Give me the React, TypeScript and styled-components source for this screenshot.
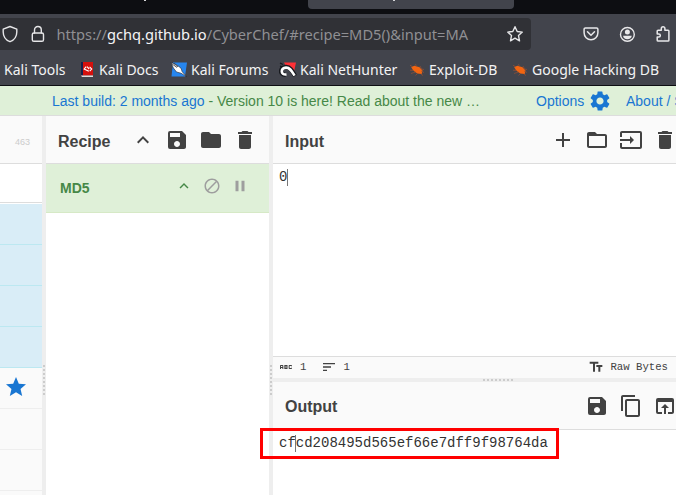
import React from "react";
import styled, { createGlobalStyle } from "styled-components";
import {
  MdAbc,
  MdAdd,
  MdBlock,
  MdContentCopy,
  MdDelete,
  MdFolder,
  MdFolderOpen,
  MdInput,
  MdKeyboardArrowUp,
  MdOpenInBrowser,
  MdPause,
  MdSave,
  MdSettings,
  MdSort,
  MdStar,
  MdTextFields,
} from "react-icons/md";

const GlobalStyle = createGlobalStyle`
  * { box-sizing: border-box; }
  html, body { margin: 0; height: 100%; overflow: hidden; }
  body { background: #fff; font-family: "Liberation Sans", Arial, sans-serif; }
  svg { display: block; flex: none; }
`;

const Window = styled.div`
  position: relative;
  width: 676px;
  height: 495px;
  display: flex;
  flex-direction: column;
  overflow: hidden;
  white-space: nowrap;
`;

/* Browser chrome */
const TabStrip = styled.div`
  height: 14px;
  flex: none;
  padding-left: 144px;
  display: flex;
  align-items: flex-start;
  background: #0d0e12;
`;
const Descender = styled.i`
  width: 2px;
  height: 1px;
  background: #d5d5d8;
`;
const ActiveTab = styled.div`
  width: 206px;
  height: 9px;
  margin-left: 162px;
  padding-left: 85px;
  display: flex;
  background: #42444c;
  border-radius: 0 0 4px 4px;
`;
const NavBar = styled.div`
  height: 36px;
  flex: none;
  padding-top: 4px;
  display: flex;
  background: #42444c;
`;
const AddressBar = styled.div`
  width: 531px;
  height: 32px;
  padding: 0 7px 0 1px;
  display: flex;
  align-items: center;
  background: #303136;
  border-radius: 0 4px 4px 0;
  color: #e6e6e8;
`;
const LockSlot = styled.span`
  margin-left: 10px;
`;
const Url = styled.span`
  width: 440px;
  margin: 0 auto 0 9.5px;
  font: 14.65px/32px "Noto Sans", sans-serif;
  color: #8f8f93;
  b { font-weight: 400; color: #f5f5f6; }
`;
const NavActions = styled.div`
  height: 32px;
  margin-left: 51px;
  display: flex;
  align-items: center;
  gap: 18px;
  color: #e8e8ea;
`;
const Bookmarks = styled.div`
  height: 36px;
  flex: none;
  padding: 4px 0 0 4px;
  display: flex;
  background: #42444c;
  border-bottom: 1px solid #0d0e12;
`;
const Bookmark = styled.span<{ $width: number; $gap?: number }>`
  width: ${(p) => p.$width}px;
  height: 32px;
  flex: none;
  display: flex;
  align-items: center;
  gap: ${(p) => p.$gap ?? 3}px;
  font: 14px/32px "Noto Sans", sans-serif;
  color: #f3f3f4;
`;

/* Application */
const Banner = styled.div`
  height: 30px;
  flex: none;
  padding-left: 52px;
  display: flex;
  align-items: center;
  background: #dff0d8;
  border-bottom: 1px solid #ddd;
  font-size: 14px;
  color: #468847;
`;
const Notice = styled.span`
  width: 484px;
  flex: none;
`;
const Link = styled.span`
  color: #1976d2;
`;
const OptionsLink = styled(Link)`
  width: 90px;
  flex: none;
  display: flex;
  align-items: center;
  gap: 4px;
`;
const Workspace = styled.div`
  flex: 1;
  min-height: 0;
  display: flex;
`;
const Operations = styled.div`
  width: 42px;
  overflow: hidden;
`;
const OpCount = styled.div`
  height: 48px;
  padding-left: 15px;
  background: #fafafa;
  border-bottom: 1px solid #ddd;
  font-size: 9px;
  line-height: 52px;
  color: #ccc;
`;
const SearchBox = styled.div`
  height: 39px;
  margin-bottom: 1px;
  border-bottom: 1px solid #ddd;
`;
const Operation = styled.div`
  height: 41px;
  background: #d9edf7;
  border-bottom: 1px solid #bce8f1;
`;
const Category = styled.div`
  height: 41px;
  padding: 7px 0 0 4px;
  background: #fafafa;
  border-bottom: 1px solid #eee;
  color: #1976d2;
`;
const Divider = styled.div<{ $top: number }>`
  width: 4px;
  flex: none;
  padding: ${(p) => p.$top}px 1px 0;
  background: #eee;
`;
const VerticalGrip = styled.div`
  width: 2px;
  height: 30px;
  background: repeating-linear-gradient(#ccc 0 2px, transparent 2px 4px);
`;
const Splitter = styled.div`
  height: 4px;
  flex: none;
  padding: 1px 0 0 210px;
  background: #eee;
`;
const HorizontalGrip = styled.div`
  width: 30px;
  height: 2px;
  background: repeating-linear-gradient(90deg, #ccc 0 2px, transparent 2px 4px);
`;
const RecipePane = styled.section`
  width: 223px;
`;
const IoPane = styled.section`
  flex: 1;
  min-width: 0;
  display: flex;
  flex-direction: column;
`;
const PaneHeader = styled.header`
  height: 48px;
  flex: none;
  padding-left: 12px;
  display: flex;
  align-items: center;
  justify-content: space-between;
  background: #fafafa;
  border-bottom: 1px solid #ddd;
  color: #424242;
`;
const Title = styled.h2<{ $drop: number }>`
  margin: 0;
  padding-top: ${(p) => p.$drop}px;
  font-size: 16px;
  line-height: 20px;
`;
const Controls = styled.div<{ $end: number }>`
  display: flex;
  gap: 10px;
  padding-top: 1px;
  margin-right: ${(p) => p.$end}px;
`;
const RecipeStep = styled.div`
  height: 49px;
  padding: 0 20px 3px 14px;
  display: flex;
  align-items: center;
  background: #dff0d8;
  border-bottom: 1px solid #d6e9c6;
  color: #468847;
`;
const StepName = styled.span`
  flex: 1;
  padding-top: 2px;
  font-size: 14px;
  font-weight: 700;
`;
const StepControls = styled.div`
  display: flex;
  gap: 10px;
  padding-bottom: 2px;
  color: #9e9e9e;
  svg:first-child { color: #468847; }
`;
const Editor = styled.div`
  height: 192px;
  flex: none;
  padding: 4px 0 0 6px;
  display: flex;
  font: 14px/18px "Liberation Mono", monospace;
  color: #333;
`;
const Caret = styled.i<{ $shift?: number }>`
  width: 1px;
  height: 17px;
  margin: 1px ${(p) => -1 + (p.$shift ?? 0)}px 0 ${(p) => -(p.$shift ?? 0)}px;
  background: #777;
`;
const StatusBar = styled.div`
  height: 22px;
  flex: none;
  padding: 0 8px 1px 5px;
  display: flex;
  align-items: center;
  background: #fafafa;
  border-top: 1px solid #ddd;
  font: 10.67px/20px "Liberation Mono", monospace;
  color: #424242;
`;
const Stat = styled.span<{ $push?: boolean }>`
  display: flex;
  align-items: center;
  gap: 6px;
  margin: ${(p) => (p.$push ? "0 0 0 auto" : "0 15px 0 0")};
`;
const Highlight = styled.div`
  position: absolute;
  left: 260px;
  top: 428px;
  width: 299px;
  height: 31px;
  border: 3px solid #f00;
`;

const line = { fill: "none", stroke: "currentColor", strokeWidth: 1.4, strokeLinejoin: "round", strokeLinecap: "round" } as const;

const Shield = () => (
  <svg width="18" height="18" viewBox="0 0 18 18" {...line}>
    <path d="M9 1.5 15.8 4.1V7c0 4.3-2.4 8-6.8 9.7C4.6 15 2.2 11.3 2.2 7V4.1Z" />
  </svg>
);
const Lock = () => (
  <svg width="18" height="18" viewBox="0 0 18 18" {...line}>
    <rect x="3.3" y="8" width="11.2" height="8.3" rx="1.6" />
    <path d="M5.5 8V4.9a3.4 3.4 0 0 1 6.8 0V8" />
  </svg>
);
const StarOutline = () => (
  <svg width="18" height="18" viewBox="0 0 18 18" {...line}>
    <path d="m9 1.7 2.2 4.8 5.1.6-3.8 3.5 1 5.2L9 13.2l-4.5 2.6 1-5.2L1.7 7.1l5.1-.6Z" />
  </svg>
);
const Pocket = () => (
  <svg width="18" height="18" viewBox="0 0 18 18" {...line} strokeWidth={1.5}>
    <path d="M3.4 3h11.2c.8 0 1.3.5 1.3 1.3v3.5a6.9 6.9 0 0 1-13.8 0V4.3C2.1 3.5 2.6 3 3.4 3Z" />
    <path d="m5.5 6.8 3.5 3.4 3.5-3.4" />
  </svg>
);
const Account = () => (
  <svg width="18" height="18" viewBox="0 0 18 18" {...line}>
    <circle cx="9.4" cy="9.4" r="6.9" />
    <circle cx="9.4" cy="7.1" r="2.5" fill="currentColor" stroke="none" />
    <path d="M5.1 10.7h8.6c0 2.1-1.9 3.5-4.3 3.5s-4.3-1.4-4.3-3.5Z" fill="currentColor" stroke="none" />
  </svg>
);
const Puzzle = () => (
  <svg width="18" height="18" viewBox="0 0 18 18" {...line} strokeWidth={1.5}>
    <path d="M3.2 6.1c0-.6.3-.9.9-.9h3.2V3.6a1.8 1.8 0 0 1 3.6 0v1.6h3.2c.5 0 .8.3.8.9v9.1c0 .6-.3.9-.9.9H4.1c-.6 0-.9-.3-.9-.9v-3.1h1.6a1.5 1.5 0 0 0 0-3.1H3.2Z" />
  </svg>
);
const DocsIcon = () => (
  <svg width="14" height="18" viewBox="0 0 14 18">
    <path d="M1 1h12v13.5H1Z" fill="#d5100d" />
    <path d="M1 1h2v13.5H1Z" fill="#16204c" />
    <path d="M1 14.5h12v1.6H2Z" fill="#dedede" />
    <path d="M6.2 5.7 4.2 8l4.6 2.2M9.6 5.8l2.100 2.200-2 2.200M9.200 8 7 5.700" fill="none" stroke="#fff" strokeWidth="1.1" />
  </svg>
);
const ForumsIcon = () => (
  <svg width="18" height="18" viewBox="0 0 18 18">
    <path d="M3 1.500h14L15 15.500H1.500Z" fill="#2786ee" />
    <path d="m1 1.500 5.500 2.200 4.500 3.500 1.200 3.500 4.500 5-5.700-3.500-4.500-1.200L3.400 7Z" fill="#fff" stroke="#1c222d" strokeWidth=".6" />
    <path d="m1.500 2.500 5.500 4M4 2.500l4 3.500" stroke="#303238" strokeWidth=".8" />
  </svg>
);
const NetHunterIcon = () => (
  <svg width="18" height="18" viewBox="0 0 18 18">
    <path d="M5 1.500h12L14.700 12 8 7Z" fill="#ff3036" />
    <path d="M6.500 13.700C.5 14 .5 6.500 7 6c4.500-.2 6.500 4.500 9 9" fill="none" stroke="#17191e" strokeWidth="4.400" />
    <path d="M7.500 13.500C.9 14 1.700 7 7 6.600c4-.2 6 4 8.500 8" fill="none" stroke="#fff" strokeWidth="2.600" />
    <path d="m1 2 3 1.500M1 5l2 .8" stroke="#17191e" strokeWidth="1.300" />
  </svg>
);
const BugIcon = () => (
  <svg width="16" height="16" viewBox="0 0 16 16">
    <path d="m2.2 5 3.300-1.200 5 1.500 3 3.200-.8 3.500-4.500-.5-4-3Z" fill="#f26511" />
    <path d="M1 3.200 4 5M6.500 2.200l1 2.500M11 4l1.500 3 2.500.5M1 8.200l4 .3M2 11.500l4.500-1.500M6.500 13.500l2-2M12 12l2 1.500M12 9l3 1.500" stroke="#9b5030" strokeWidth=".7" fill="none" />
  </svg>
);

export default function App() {
  return (
    <>
      <GlobalStyle />
      <Window>
        <TabStrip>
          <Descender />
          <ActiveTab><Descender /></ActiveTab>
        </TabStrip>
        <NavBar>
          <AddressBar>
            <Shield />
            <LockSlot><Lock /></LockSlot>
            <Url>https://<b>gchq.github.io</b>/CyberChef/#recipe=MD5()&amp;input=MA</Url>
            <StarOutline />
          </AddressBar>
          <NavActions><Pocket /><Account /><Puzzle /></NavActions>
        </NavBar>
        <Bookmarks>
          <Bookmark $width={76}>Kali Tools</Bookmark>
          <Bookmark $width={90} $gap={5}><DocsIcon />Kali Docs</Bookmark>
          <Bookmark $width={109}><ForumsIcon />Kali Forums</Bookmark>
          <Bookmark $width={130}><NetHunterIcon />Kali NetHunter</Bookmark>
          <Bookmark $width={103} $gap={4}><BugIcon />Exploit-DB</Bookmark>
          <Bookmark $width={160} $gap={4}><BugIcon />Google Hacking DB</Bookmark>
        </Bookmarks>
        <Banner>
          <Notice><Link>Last build: 2 months ago</Link> - Version 10 is here! Read about the new …</Notice>
          <OptionsLink>Options <MdSettings size={24} /></OptionsLink>
          <Link>About / S</Link>
        </Banner>
        <Workspace>
          <Operations>
            <OpCount>463</OpCount>
            <SearchBox />
            <Operation /><Operation /><Operation /><Operation />
            <Category><MdStar size={24} /></Category>
            <Category /><Category /><Category />
          </Operations>
          <Divider $top={249}><VerticalGrip /></Divider>
          <RecipePane>
            <PaneHeader>
              <Title $drop={5}>Recipe</Title>
              <Controls $end={12}>
                <MdKeyboardArrowUp size={24} /><MdSave size={24} /><MdFolder size={24} /><MdDelete size={24} />
              </Controls>
            </PaneHeader>
            <RecipeStep>
              <StepName>MD5</StepName>
              <StepControls>
                <MdKeyboardArrowUp size={18} /><MdBlock size={18} /><MdPause size={18} />
              </StepControls>
            </RecipeStep>
          </RecipePane>
          <Divider $top={249}><VerticalGrip /></Divider>
          <IoPane>
            <PaneHeader>
              <Title $drop={5}>Input</Title>
              <Controls $end={-1}>
                <MdAdd size={24} /><MdFolderOpen size={24} /><MdInput size={24} /><MdDelete size={24} />
              </Controls>
            </PaneHeader>
            <Editor>0<Caret /></Editor>
            <StatusBar>
              <Stat><MdAbc size={16} />1</Stat>
              <Stat><MdSort size={16} />1</Stat>
              <Stat $push><MdTextFields size={16} />Raw Bytes</Stat>
            </StatusBar>
            <Splitter><HorizontalGrip /></Splitter>
            <PaneHeader>
              <Title $drop={3}>Output</Title>
              <Controls $end={-1}>
                <MdSave size={24} /><MdContentCopy size={24} /><MdOpenInBrowser size={24} />
              </Controls>
            </PaneHeader>
            <Editor>cf<Caret $shift={1} />cd208495d565ef66e7dff9f98764da</Editor>
          </IoPane>
        </Workspace>
        <Highlight />
      </Window>
    </>
  );
}
